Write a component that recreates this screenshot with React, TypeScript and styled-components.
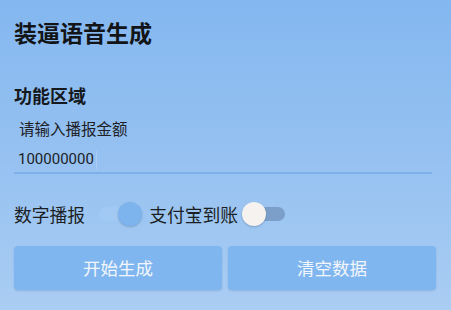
import React from 'react';
import styled, { createGlobalStyle } from 'styled-components';

const GlobalStyle = createGlobalStyle`
    html, body {
        margin: 0;
        padding: 0;
    }
    body {
        font-family: "Noto Sans CJK SC", "Noto Sans", Roboto, sans-serif;
    }
`

const Page = styled.div`
    width: 451px;
    height: 310px;
    box-sizing: border-box;
    padding: 16px 15px 0 14px;
    background: linear-gradient(180deg, #84b7f0 0%, #97c2f1 55%, #aacdf3 100%);
    display: flex;
    flex-direction: column;
    overflow: hidden;
`

const Title = styled.div`
    height: 32px;
    line-height: 32px;
    font-size: 23px;
    font-weight: 700;
    color: #121417;
`

const Section = styled.div`
    margin-top: 35px;
    height: 24px;
    line-height: 24px;
    font-size: 18px;
    font-weight: 700;
    color: #15181c;
`

const Hint = styled.div`
    margin-top: 9px;
    padding-left: 5px;
    height: 24px;
    line-height: 24px;
    font-size: 15.5px;
    color: #1d2126;
`

const InputLine = styled.div`
    margin-top: 7px;
    width: 418px;
    height: 27px;
    line-height: 27px;
    padding-left: 4px;
    box-sizing: border-box;
    border-bottom: 2px solid #7eb0e7;
    font-family: Roboto, "Noto Sans", sans-serif;
    font-size: 15px;
    color: #1d2126;
    display: flex;
    align-items: center;
`

const Caret = styled.span`
    display: inline-block;
    width: 1px;
    height: 18px;
    margin-left: 2px;
    background: #a9cdf5;
`

const SwitchRow = styled.div`
    margin-top: 25px;
    height: 30px;
    display: flex;
    align-items: center;
`

const Label = styled.span<{ $gap?: number }>`
    font-size: 17.8px;
    color: #1b1f24;
    margin-left: ${p => p.$gap ?? 0}px;
    white-space: nowrap;
`

const Switch = styled.div<{ $on?: boolean; $gap: number }>`
    position: relative;
    width: 42px;
    height: 14px;
    margin-left: ${p => p.$gap}px;
    border-radius: 7px;
    background: ${p => (p.$on ? '#a1c9f3' : '#7b9fc8')};
`

const Thumb = styled.div<{ $on?: boolean }>`
    position: absolute;
    top: -5px;
    ${p => (p.$on ? 'right: -1px;' : 'left: -1px;')}
    width: 24px;
    height: 24px;
    border-radius: 50%;
    background: ${p => (p.$on ? '#7db4ee' : '#f5f2ef')};
    box-shadow: 0 1px 2px rgba(40, 70, 110, 0.3);
`

const ButtonRow = styled.div`
    margin-top: 17px;
    display: grid;
    grid-template-columns: 208px 208px;
    column-gap: 6px;
`

const Button = styled.div`
    height: 44px;
    line-height: 44px;
    border-radius: 4px;
    background: #80b6ef;
    box-shadow: 0 1px 2px rgba(50, 90, 140, 0.2);
    text-align: center;
    font-size: 17.5px;
    color: #f2f6fc;
`

const App: React.FC = () => {
    return (
        <>
            <GlobalStyle />
            <Page>
                <Title>装逼语音生成</Title>
                <Section>功能区域</Section>
                <Hint>请输入播报金额</Hint>
                <InputLine>
                    100000000
                    <Caret />
                </InputLine>
                <SwitchRow>
                    <Label>数字播报</Label>
                    <Switch $on $gap={14}>
                        <Thumb $on />
                    </Switch>
                    <Label $gap={8}>支付宝到账</Label>
                    <Switch $gap={5}>
                        <Thumb />
                    </Switch>
                </SwitchRow>
                <ButtonRow>
                    <Button>开始生成</Button>
                    <Button>清空数据</Button>
                </ButtonRow>
            </Page>
        </>
    );
}

export default App;
